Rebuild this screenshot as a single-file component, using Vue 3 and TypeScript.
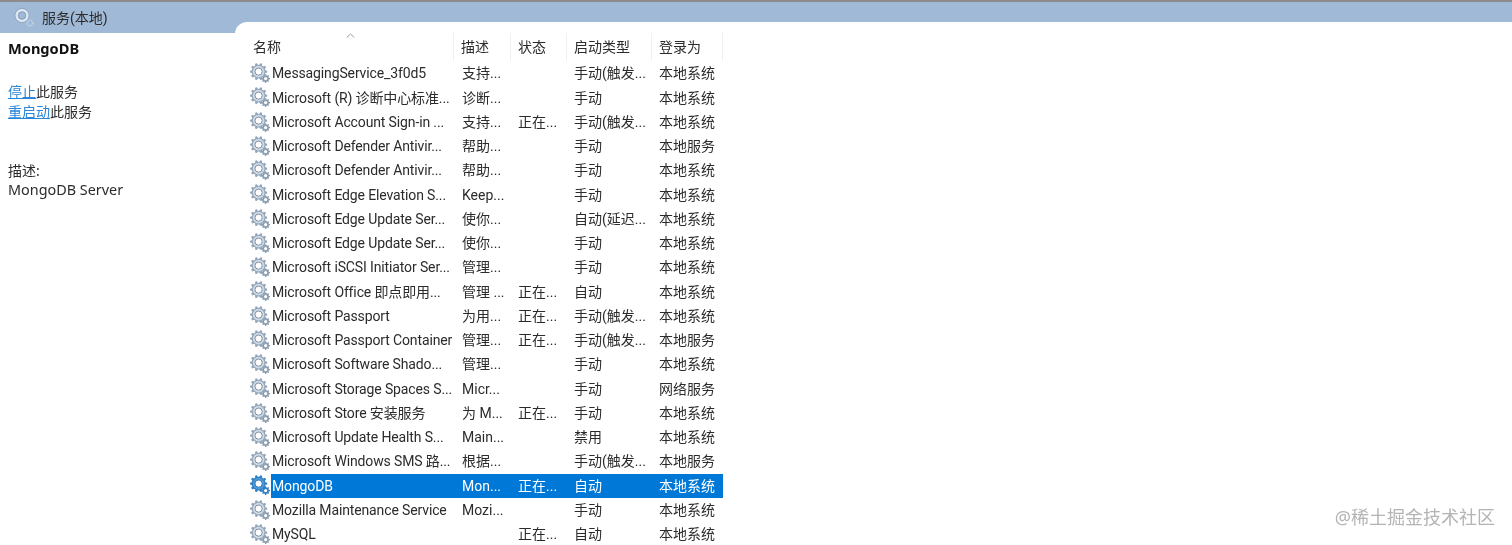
<script setup lang="ts">
interface Service {
  name: string
  desc: string
  status: string
  start: string
  login: string
  selected?: boolean
}

const services: Service[] = [
  { name: 'MessagingService_3f0d5', desc: '支持...', status: '', start: '手动(触发...', login: '本地系统' },
  { name: 'Microsoft (R) 诊断中心标准...', desc: '诊断...', status: '', start: '手动', login: '本地系统' },
  { name: 'Microsoft Account Sign-in ...', desc: '支持...', status: '正在...', start: '手动(触发...', login: '本地系统' },
  { name: 'Microsoft Defender Antivir...', desc: '帮助...', status: '', start: '手动', login: '本地服务' },
  { name: 'Microsoft Defender Antivir...', desc: '帮助...', status: '', start: '手动', login: '本地系统' },
  { name: 'Microsoft Edge Elevation S...', desc: 'Keep...', status: '', start: '手动', login: '本地系统' },
  { name: 'Microsoft Edge Update Ser...', desc: '使你...', status: '', start: '自动(延迟...', login: '本地系统' },
  { name: 'Microsoft Edge Update Ser...', desc: '使你...', status: '', start: '手动', login: '本地系统' },
  { name: 'Microsoft iSCSI Initiator Ser...', desc: '管理...', status: '', start: '手动', login: '本地系统' },
  { name: 'Microsoft Office 即点即用...', desc: '管理 ...', status: '正在...', start: '自动', login: '本地系统' },
  { name: 'Microsoft Passport', desc: '为用...', status: '正在...', start: '手动(触发...', login: '本地系统' },
  { name: 'Microsoft Passport Container', desc: '管理...', status: '正在...', start: '手动(触发...', login: '本地服务' },
  { name: 'Microsoft Software Shado...', desc: '管理...', status: '', start: '手动', login: '本地系统' },
  { name: 'Microsoft Storage Spaces S...', desc: 'Micr...', status: '', start: '手动', login: '网络服务' },
  { name: 'Microsoft Store 安装服务', desc: '为 M...', status: '正在...', start: '手动', login: '本地系统' },
  { name: 'Microsoft Update Health S...', desc: 'Main...', status: '', start: '禁用', login: '本地系统' },
  { name: 'Microsoft Windows SMS 路...', desc: '根据...', status: '', start: '手动(触发...', login: '本地服务' },
  { name: 'MongoDB', desc: 'Mon...', status: '正在...', start: '自动', login: '本地系统', selected: true },
  { name: 'Mozilla Maintenance Service', desc: 'Mozi...', status: '', start: '手动', login: '本地系统' },
  { name: 'MySQL', desc: '', status: '正在...', start: '自动', login: '本地系统' },
]

const columns = ['名称', '描述', '状态', '启动类型', '登录为']

// builds a toothed ring around (cx, cy)
function gearPath(cx: number, cy: number, outer: number, root: number, teeth: number): string {
  const points: string[] = []
  const step = (Math.PI * 2) / teeth
  for (let i = 0; i < teeth; i++) {
    const a = i * step
    const offsets: [number, number][] = [
      [-0.32, root],
      [-0.18, outer],
      [0.18, outer],
      [0.32, root],
    ]
    for (const [o, r] of offsets) {
      const x = cx + Math.cos(a + o * step) * r
      const y = cy + Math.sin(a + o * step) * r
      points.push(`${x.toFixed(2)} ${y.toFixed(2)}`)
    }
  }
  return 'M' + points.join('L') + 'Z'
}

const bigGear = gearPath(8.6, 8.6, 8.6, 6.9, 10)
const smallGear = gearPath(15.6, 15.6, 4.4, 3.3, 8)
</script>

<template>
  <div class="window">
    <div class="left">
      <div class="title">
        <svg class="title-icon" width="22" height="22" viewBox="0 0 22 22">
          <circle cx="9" cy="9.5" r="5.4" fill="none" stroke="#dde7f1" stroke-width="2.8" />
          <circle cx="9" cy="9.5" r="7.1" fill="none" stroke="#7f97b0" stroke-width="0.6" />
          <circle cx="9" cy="9.5" r="3.7" fill="none" stroke="#6f88a3" stroke-width="0.6" />
          <circle cx="17" cy="17" r="2.8" fill="none" stroke="#c4d2df" stroke-width="1.8" stroke-dasharray="1.4 0.9" />
        </svg>
        <span>服务(本地)</span>
      </div>
      <div class="detail">
        <h1 class="detail-name">MongoDB</h1>
        <p class="action"><a class="link">停止</a>此服务</p>
        <p class="action"><a class="link">重启动</a>此服务</p>
        <p class="desc-label">描述:</p>
        <p class="desc-text">MongoDB Server</p>
      </div>
    </div>

    <div class="right">
      <div class="pane">
        <div class="list">
          <div class="head">
            <div v-for="(c, i) in columns" :key="c" class="head-cell">
              <svg v-if="i === 0" class="sort" width="9" height="5" viewBox="0 0 9 5">
                <path d="M0.8 4.4 4.5 1 8.2 4.4" fill="none" stroke="#9a9a9a" stroke-width="1" />
              </svg>
              {{ c }}
            </div>
          </div>
          <div v-for="(s, i) in services" :key="i" class="row" :class="{ selected: s.selected }">
            <div class="cell name-cell">
              <svg class="gear" width="21" height="21" viewBox="0 0 21 21">
                <path :d="smallGear" :fill="s.selected ? '#2f7fc4' : '#8a9cb0'" />
                <circle cx="15.6" cy="15.6" r="1.6" fill="#fff" />
                <path :d="bigGear" :fill="s.selected ? '#2f7fc4' : '#93a6b9'" />
                <circle cx="8.6" cy="8.6" r="5.8" :fill="s.selected ? '#4f98d6' : '#cfdae5'" />
                <circle cx="8.6" cy="8.6" r="3.6" fill="#fff" :stroke="s.selected ? '#1f6fb4' : '#71879d'" stroke-width="0.9" />
              </svg>
              <span class="name">{{ s.name }}</span>
            </div>
            <div class="cell">{{ s.desc }}</div>
            <div class="cell">{{ s.status }}</div>
            <div class="cell">{{ s.start }}</div>
            <div class="cell">{{ s.login }}</div>
          </div>
        </div>
      </div>
    </div>

    <div class="watermark">@稀土掘金技术社区</div>
  </div>
</template>

<style scoped>
.window {
  position: relative;
  display: grid;
  grid-template-columns: 235px 1fr;
  height: 543px;
  overflow: hidden;
  border-top: 2px solid #8c8c8c;
  background: #a0b9d6;
  color: #2b2b2b;
  font-family: Roboto, "Noto Sans CJK SC", sans-serif;
  font-size: 14px;
  filter: blur(0.3px);
}

.left {
  display: flex;
  flex-direction: column;
}

.title {
  display: flex;
  align-items: center;
  gap: 7px;
  height: 31px;
  padding: 0 0 2px 13px;
  box-sizing: border-box;
  font-size: 14px;
}

.detail {
  flex: 1;
  background: #fff;
  padding: 5px 0 0 8px;
  font-family: "Noto Sans", "Noto Sans CJK SC", sans-serif;
  font-size: 14.4px;
}

.detail-name {
  margin: 0 0 24px;
  height: 20px;
  font-size: 14.6px;
  line-height: 20px;
  font-weight: 700;
  color: #111;
}

.action {
  margin: 0;
  height: 20px;
  line-height: 20px;
  font-size: 14px;
}

.link {
  color: #2a85d8;
  text-decoration: underline;
}

.desc-label {
  margin: 39px 0 0;
  line-height: 19px;
  font-size: 14px;
}

.desc-text {
  margin: 0;
  line-height: 19px;
}

.right {
  padding-top: 20px;
  min-width: 0;
}

.pane {
  height: 100%;
  background: #fff;
  border-top-left-radius: 12px;
}

.list {
  width: 488px;
}

.head {
  display: grid;
  grid-template-columns: 219px 57px 56px 85px 71px;
  height: 39.4px;
  box-sizing: border-box;
  padding: 11px 0 0.4px;
  font-size: 14px;
}

.head-cell {
  position: relative;
  padding-left: 7px;
  border-right: 1px solid #eef0f2;
  line-height: 28px;
}

.head-cell:first-child {
  padding-left: 18px;
}

.sort {
  position: absolute;
  top: 0;
  left: 111px;
}

.row {
  display: grid;
  grid-template-columns: 219px 57px 56px 85px 71px;
  height: 24.26px;
  line-height: 24.26px;
}

.cell {
  padding-left: 7px;
  white-space: nowrap;
  overflow: hidden;
}

.cell:nth-child(2) {
  padding-left: 8px;
}

.name-cell {
  display: flex;
  align-items: center;
  padding-left: 15px;
  overflow: visible;
}

.gear {
  flex: none;
}

.name {
  flex: 1;
  padding-left: 1px;
  min-width: 0;
  letter-spacing: -0.13px;
}

.row.selected .cell {
  background: #0078d7;
  color: #fff;
}

.row.selected .name-cell {
  background: none;
}

.row.selected .name {
  background: #0078d7;
  color: #fff;
  align-self: stretch;
}

.watermark {
  position: absolute;
  right: 17px;
  bottom: 16px;
  font-size: 18px;
  line-height: 24px;
  color: #b4b4b4;
  font-family: "Noto Sans", "Noto Sans CJK SC", sans-serif;
}
</style>
